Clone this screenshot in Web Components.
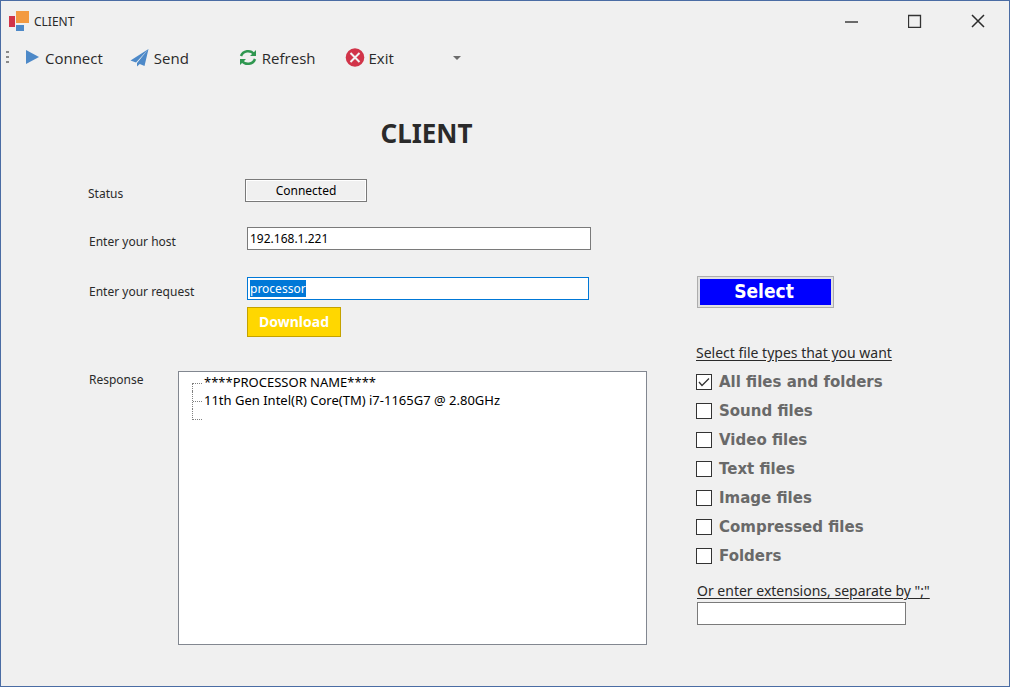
<!DOCTYPE html>
<html lang="en">
<head>
<meta charset="utf-8">
<title>CLIENT</title>
<style>
  html, body { margin: 0; height: 100%; }
  body { background: #f0f0f0; color: #2a2a2a; font: 12px/16px "Noto Sans", "Open Sans", sans-serif; }
</style>
</head>
<body>
<client-window></client-window>

<template id="window-tpl">
  <style>
    :host { display: flex; flex-direction: column; box-sizing: border-box; min-height: 100%; border: 1px solid #4a6ca4; background: #f0f0f0; }
    main { flex: 1; display: grid; grid-template-columns: minmax(0, 1fr) 240px; column-gap: 49px; padding: 40px 73px 41px 87px; }
    .form { display: flex; flex-direction: column; }
    h1 { margin: 0 0 28px; padding-left: 118px; text-align: center; font-size: 26px; line-height: 36px; font-weight: 700; }
  </style>
  <title-bar>CLIENT</title-bar>
  <tool-bar></tool-bar>
  <main>
    <section class="form">
      <h1>CLIENT</h1>
      <request-form></request-form>
    </section>
    <file-filter></file-filter>
  </main>
</template>

<template id="title-tpl">
  <style>
    :host { display: flex; align-items: center; height: 40px; padding-left: 8px; }
    .name { flex: 1; margin-left: 5px; padding-top: 2px; }
    .caption { width: 63px; height: 40px; padding: 0; border: 0; background: none; display: grid; place-items: center; }
    svg { display: block; }
  </style>
  <svg width="20" height="20" viewBox="0 0 20 20" aria-hidden="true">
    <path fill="#d13449" d="M0 5h6v11H0z"/>
    <path fill="#f39a41" d="M7 0h13v12H7z"/>
    <path fill="#4d89c8" d="M7 14h8v6H7z"/>
  </svg>
  <span class="name"><slot></slot></span>
  <button class="caption" aria-label="Minimize"><svg width="14" height="14"><path d="M0 8h13" stroke="#6a6a6a" stroke-width="2"/></svg></button>
  <button class="caption" aria-label="Maximize"><svg width="14" height="14"><path d="M.5 1.500h12v12H.5z" fill="none" stroke="#333" stroke-width="1.300"/></svg></button>
  <button class="caption" aria-label="Close"><svg width="14" height="14"><path d="M1 1l12 12M13 1L1 13" stroke="#2b2b2b" stroke-width="1.5"/></svg></button>
</template>

<template id="toolbar-tpl">
  <style>
    :host { display: flex; align-items: center; height: 34px; padding-left: 5px; }
    .connect { margin-left: 12px; }
    .send { margin-left: 27px; }
    .refresh { margin-left: 49px; }
    .exit { margin-left: 29px; }
    svg { display: block; }
    .more { margin-left: 53px; width: 20px; height: 26px; padding: 0; border: 0; background: none; display: grid; place-items: center; }
  </style>
  <svg width="3" height="14" aria-hidden="true"><path fill="#8a8a8a" d="M0 0h3v2H0zM0 5h3v2H0zM0 10h3v2H0z"/></svg>
  <tool-item class="connect">
    <svg slot="icon" width="20" height="20"><path fill="#4d89c8" d="M5 2l13 7-13 7z"/></svg>Connect
  </tool-item>
  <tool-item class="send">
    <svg slot="icon" width="20" height="20"><path fill="#4d89c8" d="M18.500 1L.5 12.500l5.500 2zM18.500 1L7 15v3.500l2.800-2.500 4.700 2z"/></svg>Send
  </tool-item>
  <tool-item class="refresh">
    <svg slot="icon" width="20" height="20"><g fill="none" stroke="#2f9750" stroke-width="2.500"><path d="M3 8c2-5.500 9.500-6.500 13-2"/><path d="M17 11c-2 5.500-9.500 6.500-13 2"/></g><path fill="#2f9750" d="M18 2v6h-6zM2 17v-6h6z"/></svg>Refresh
  </tool-item>
  <tool-item class="exit">
    <svg slot="icon" width="20" height="20"><circle cx="10" cy="9.500" r="9.300" fill="#d13449"/><path d="M5.500 5l9 9M14.500 5l-9 9" stroke="#f3f3f3" stroke-width="2"/></svg>Exit
  </tool-item>
  <button class="more" aria-label="More"><svg width="8" height="4"><path fill="#6b6b6b" d="M0 0h8L4 4z"/></svg></button>
</template>

<template id="tool-item-tpl">
  <style>
    :host { display: block; }
    button { display: flex; align-items: center; gap: 4px; padding: 0; border: 0; background: none; color: inherit; font: 15px/24px "Open Sans", "Noto Sans", sans-serif; }
  </style>
  <button><slot name="icon"></slot><span><slot></slot></span></button>
</template>

<template id="form-tpl">
  <style>
    :host { flex: 1; display: flex; flex-direction: column; }
    .row { display: grid; grid-template-columns: 159px minmax(0, 1fr); align-items: start; }
    .row label { padding: 7px 0 0 1px; }
    .status { grid-template-columns: 157px 122px; margin-bottom: 25px; }
    .status label { padding-left: 0; }
    .host { margin: 0 56px 27px 0; }
    .request { margin: 0 58px 7px 0; }
    .status output { box-sizing: border-box; height: 23px; border: 1px solid #7a7a7a; box-shadow: inset 0 0 0 1px #fff; text-align: center; line-height: 21px; color: #000; }
    input { box-sizing: border-box; width: 100%; height: 23px; margin: 0; padding: 0 2px; border: 1px solid #7a7a7a; border-radius: 0; outline: 0; background: #fff; color: #000; font: inherit; }
    input:focus { border-color: #0078d7; }
    ::selection { background: #0078d7; color: #fff; }
    .download { align-self: flex-start; width: 94px; height: 30px; margin: 0 0 34px 159px; padding: 0; border: 1px solid #c4a200; background: #ffd700; color: #fff; font: inherit; font-size: 14px; font-weight: 700; }
    .response { flex: 1; display: grid; grid-template-columns: 90px minmax(0, 1fr); }
    .response span { padding: 1px 0 0 1px; }
  </style>
  <div class="row status"><label for="status">Status</label><output id="status">Connected</output></div>
  <div class="row host"><label for="host">Enter your host</label><input id="host" value="192.168.1.221"></div>
  <div class="row request"><label for="request">Enter your request</label><input id="request" value="processor"></div>
  <button class="download">Download</button>
  <div class="response"><span>Response</span><response-tree></response-tree></div>
</template>

<template id="tree-tpl">
  <style>
    :host { display: block; border: 1px solid #828790; background: #fff; color: #000; }
    ul { list-style: none; margin: 0; padding: 1px 0 0 13px; font-size: 13px; line-height: 18px; }
    li { display: grid; grid-template-columns: 10px 1fr; column-gap: 2px; height: 18px; }
    li::before { content: ""; box-sizing: border-box; height: 18px; border-left: 1px dotted #808080;
      background: repeating-linear-gradient(90deg, #808080 0 1px, transparent 1px 2px) 0 10px / 10px 1px no-repeat; }
    li:first-child::before { height: 8px; margin-top: 10px; background-position: 0 0; }
    li:last-child::before { height: 11px; }
  </style>
  <ul>
    <li>****PROCESSOR NAME****</li>
    <li>11th Gen Intel(R) Core(TM) i7-1165G7 @ 2.80GHz</li>
    <li></li>
  </ul>
</template>

<template id="filter-tpl">
  <style>
    :host { display: flex; flex-direction: column; align-items: flex-start; padding-top: 161px; }
    .select { width: 137px; height: 32px; margin: 0 0 35px 1px; padding: 0 3px 2px 0; border: 1px solid #adadad; background: #00f; box-shadow: inset 0 0 0 2px #e1e1e1; color: #fff; font: 700 19px/24px "DejaVu Sans Condensed", "Noto Sans", sans-serif; }
    fieldset { margin: 0; padding: 0; border: 0; min-width: 0; }
    legend, .ext { padding: 0; font-size: 14px; line-height: 20px; text-decoration: underline; text-underline-offset: 2px; white-space: nowrap; }
    legend { margin-bottom: 4px; }
    .ext { margin: 11px 0 1px 1px; }
    input { box-sizing: border-box; width: 209px; height: 23px; margin: 0 0 0 1px; padding: 0 2px; border: 1px solid #7a7a7a; border-radius: 0; background: #fff; font: inherit; }
  </style>
  <button class="select">Select</button>
  <fieldset>
    <legend>Select file types that you want</legend>
    <check-option checked>All files and folders</check-option>
    <check-option>Sound files</check-option>
    <check-option>Video files</check-option>
    <check-option>Text files</check-option>
    <check-option>Image files</check-option>
    <check-option>Compressed files</check-option>
    <check-option>Folders</check-option>
  </fieldset>
  <label class="ext" for="ext">Or enter extensions, separate by ";"</label>
  <input id="ext">
</template>

<template id="check-tpl">
  <style>
    :host { display: block; }
    label { display: flex; align-items: center; gap: 7px; height: 29px; color: #696969; font: 700 15px/24px "DejaVu Sans", "Noto Sans", sans-serif; white-space: nowrap; }
    input { appearance: none; flex: none; box-sizing: border-box; width: 16px; height: 16px; margin: 0; border: 1px solid #333; background: #fff; }
    input:checked { background: #fff url("data:image/svg+xml,%3Csvg xmlns='http://www.w3.org/2000/svg' width='14' height='14'%3E%3Cpath d='M2 7l3 3.500L12 3.500' fill='none' stroke='%23333' stroke-width='1.300'/%3E%3C/svg%3E") center no-repeat; }
  </style>
  <label><input type="checkbox"><span><slot></slot></span></label>
</template>

<script>
  const define = (name, templateId, setup) => customElements.define(name, class extends HTMLElement {
    constructor() {
      super();
      this.attachShadow({ mode: "open" }).append(document.getElementById(templateId).content.cloneNode(true));
    }
    connectedCallback() { if (setup) setup(this, this.shadowRoot); }
  });

  define("tool-item", "tool-item-tpl");
  define("title-bar", "title-tpl");
  define("tool-bar", "toolbar-tpl");
  define("response-tree", "tree-tpl");
  define("check-option", "check-tpl", (host, root) => {
    root.querySelector("input").checked = host.hasAttribute("checked");
  });
  define("file-filter", "filter-tpl");
  define("request-form", "form-tpl", (host, root) => {
    const request = root.getElementById("request");
    request.focus();
    request.select();
  });
  define("client-window", "window-tpl");
</script>
</body>
</html>
